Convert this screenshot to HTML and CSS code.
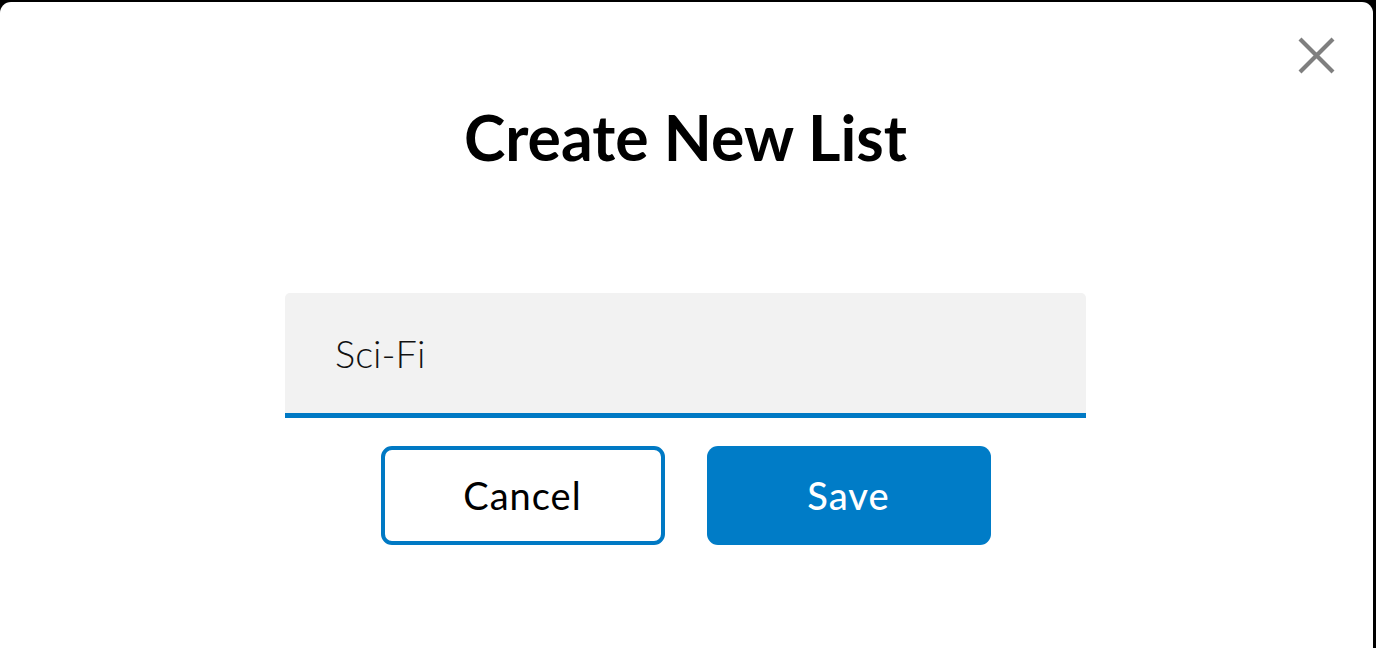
FILE: index.html
```html
<!DOCTYPE html>
<html>
<head>
<meta charset="utf-8">
<link rel="stylesheet" href="styles.css">
</head>
<body>
<div class="modal">
  <button class="close" aria-label="Close">
    <svg width="40" height="40" viewBox="0 0 40 40"><path d="M4 3 L37 36 M37 3 L4 36" stroke="#7f7f7f" stroke-width="4.2" fill="none"/></svg>
  </button>
  <h1 class="title">Create New List</h1>
  <div class="field">
    <input class="input" type="text" value="Sci-Fi">
  </div>
  <div class="actions">
    <button class="btn btn-outline">Cancel</button>
    <button class="btn btn-primary">Save</button>
  </div>
</div>
</body>
</html>
```
FILE: styles.css
```css
html, body {
  margin: 0;
  padding: 0;
  background: #000;
  height: 100%;
  overflow: hidden;
}
.modal {
  position: relative;
  box-sizing: border-box;
  margin: 2px 3px 0 0;
  padding-right: 2px;
  height: calc(100% - 2px);
  background: #fff;
  border-radius: 11px 11px 0 0;
  display: flex;
  flex-direction: column;
  align-items: center;
  font-family: Lato, "Open Sans", sans-serif;
}
.close {
  position: absolute;
  top: 34px;
  right: 37px;
  width: 40px;
  height: 40px;
  padding: 0;
  border: 0;
  background: none;
}
.close svg { display: block; }
.title {
  margin: 0;
  padding-top: 98px;
  font-size: 62.5px;
  line-height: 74px;
  font-weight: 700;
  color: #000;
}
.field {
  margin-top: 119px;
  width: 801px;
}
.input {
  display: block;
  box-sizing: border-box;
  width: 100%;
  height: 125px;
  margin: 0;
  padding: 0 0 0 50px;
  border: 0;
  border-bottom: 5px solid #0079c4;
  border-radius: 5px 5px 0 0;
  background: #f2f2f2;
  font-family: Lato, "Open Sans", sans-serif;
  font-size: 38px;
  font-weight: 300;
  color: #111;
  outline: none;
}
.actions {
  margin-top: 28px;
  display: flex;
  gap: 42px;
}
.btn {
  box-sizing: border-box;
  width: 284px;
  height: 99px;
  border-radius: 11px;
  font-family: Lato, "Open Sans", sans-serif;
  font-size: 38px;
  letter-spacing: 1px;
  padding: 0 0 2px;
}
.btn-outline {
  background: #fff;
  border: 4px solid #0079c4;
  color: #000;
  font-weight: 400;
}
.btn-primary {
  background: #007cc7;
  border: 0;
  color: #fff;
  font-weight: 500;
}
```
